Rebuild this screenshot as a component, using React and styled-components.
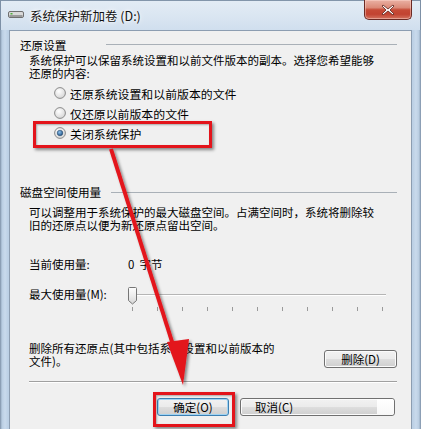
import React from 'react';
import styled, { createGlobalStyle } from 'styled-components';

const Global = createGlobalStyle`
  html, body { margin: 0; padding: 0; background: #fff; }
  body { font-family: "Noto Sans CJK SC", "Noto Sans CJK JP", sans-serif; }
`;

const Window = styled.div`
  position: relative;
  width: 421px;
  height: 429px;
  overflow: hidden;
  display: flex;
  flex-direction: column;
  background: linear-gradient(90deg, #7d90a6 0, #b9cde2 2px, #c9daec 5px, #bcd0e5 8px, #c6d8ea 50%, #bcd0e5 413px, #c9daec 416px, #b9cde2 419px, #7d90a6 421px);
`;

const TitleBar = styled.div`
  height: 30px;
  display: flex;
  align-items: center;
  padding-left: 8px;
  background: linear-gradient(180deg, #e3ecf5 0%, #d9e5f1 60%, #d0dfee 100%);
  box-shadow: inset 1px 0 0 #7d90a6, inset -1px 0 0 #7d90a6, inset 0 1px 0 #8295aa;
`;

const TitleText = styled.span`
  margin-left: 6px;
  font-size: 12.5px;
  color: #111;
  text-shadow: 0 0 6px #fff, 0 0 3px #fff;
`;

const CloseBtn = styled.div`
  margin-left: auto;
  margin-right: 9px;
  align-self: flex-start;
  width: 46px;
  height: 19px;
  border: 1px solid #6b2a24;
  border-top: none;
  border-radius: 0 0 5px 5px;
  background: linear-gradient(180deg, #eab1a4 0%, #db8a78 40%, #c64a36 52%, #c24331 75%, #d3725f 100%);
  display: flex;
  align-items: center;
  justify-content: center;
  box-shadow: inset 0 0 0 1px rgba(255, 220, 210, 0.45);
`;

const Body = styled.div`
  flex: 1;
  margin: 0 9px;
  background: #f0f0f0;
  border: 1px solid #8c9db1;
  border-bottom: none;
  padding: 6px 14px 0 10px;
  display: flex;
  flex-direction: column;
  font-size: 11.5px;
  color: #000;
`;

const GroupHeader = styled.div`
  display: flex;
  align-items: center;
  height: 16px;
  margin-top: ${p => p.$mt || 0}px;
`;

const GroupLabel = styled.span`
  font-size: 11.6px;
  line-height: 16px;
`;

const GroupLine = styled.div`
  flex: 1;
  height: 1px;
  margin-left: ${p => p.$gap}px;
  margin-top: ${p => p.$dy || 0}px;
  background: #a9b0b7;
`;

const Para = styled.div`
  padding-left: 9px;
  line-height: ${p => p.$lh || 12.5}px;
  margin-top: ${p => p.$mt || 0}px;
  white-space: nowrap;
`;

const RadioList = styled.div`
  display: flex;
  flex-direction: column;
  margin-top: 4px;
  padding-left: 34px;
`;

const RadioRow = styled.div`
  display: flex;
  align-items: center;
  height: 20px;
  gap: 4px;
  font-size: 11.9px;
`;

const InfoRow = styled.div`
  display: flex;
  align-items: center;
  height: ${p => p.$h || 16}px;
  margin-top: ${p => p.$mt || 0}px;
  padding-left: 9px;
`;

const InfoLabel = styled.span`
  width: ${p => p.$w}px;
  flex: none;
`;

const SliderRow = styled.div`
  display: flex;
  align-items: flex-start;
  margin-top: 10px;
  padding-left: 9px;
  height: 30px;
`;

const SliderLabel = styled.span`
  width: 98px;
  line-height: 24px;
  flex: none;
`;

const DeleteRow = styled.div`
  display: flex;
  align-items: flex-start;
  margin-top: 30px;
  padding-left: 9px;
`;

const DeleteText = styled.div`
  line-height: 12.5px;
  white-space: nowrap;
`;

const Button = styled.div`
  box-sizing: border-box;
  flex: none;
  width: ${p => p.$w}px;
  height: 18px;
  margin-top: ${p => p.$mt || 0}px;
  margin-left: ${p => (p.$pushRight ? 'auto' : '0')};
  border: 1px solid ${p => (p.$default ? '#3c7fb1' : '#707070')};
  border-radius: 3px;
  background: linear-gradient(180deg, #f2f2f2 0%, #ebebeb 48%, #dddddd 52%, #cfcfcf 100%);
  box-shadow: inset 0 0 0 1px ${p => (p.$default ? '#9fd3f3' : '#fbfbfb')};
  display: flex;
  align-items: center;
  justify-content: ${p => (p.$left ? 'flex-start' : 'center')};
  padding-left: ${p => p.$pl || 0}px;
  font-size: 11.5px;
  color: #000;
  overflow: hidden;
`;

const ButtonGlare = styled.span`
  margin-left: auto;
  width: 17px;
  height: 16px;
  border-radius: 0 2px 2px 0;
  background: linear-gradient(180deg, #ffffff 0%, #f7f7f7 100%);
`;

const Separator = styled.div`
  height: 1px;
  margin: 13px 0 0 9px;
  background: #a0a0a0;
  box-shadow: 0 1px 0 #ffffff;
`;

const ButtonRow = styled.div`
  display: flex;
  justify-content: flex-end;
  gap: 11px;
  margin-top: 16px;
  padding-right: 2px;
`;

const RedBox = styled.div`
  position: absolute;
  left: ${p => p.$x}px;
  top: ${p => p.$y}px;
  width: ${p => p.$w}px;
  height: ${p => p.$h}px;
  box-sizing: border-box;
  border: 3px solid #e3141b;
  box-shadow: 2px 2px 3px rgba(0, 0, 0, 0.45), inset 1px 1px 2px rgba(0, 0, 0, 0.3);
  pointer-events: none;
`;

const ArrowLayer = styled.svg`
  position: absolute;
  left: 0;
  top: 0;
  pointer-events: none;
`;

function Radio({ checked }) {
  return (
    <svg width="12" height="12" viewBox="0 0 12 12">
      <defs>
        <radialGradient id="rf" cx="0.4" cy="0.35" r="0.7">
          <stop offset="0" stopColor="#ffffff" />
          <stop offset="1" stopColor="#d4d4d4" />
        </radialGradient>
        <radialGradient id="rd" cx="0.4" cy="0.35" r="0.7">
          <stop offset="0" stopColor="#8cc1ee" />
          <stop offset="1" stopColor="#1b4d7e" />
        </radialGradient>
      </defs>
      <circle cx="6" cy="6" r="5.4" fill="url(#rf)" stroke="#8b8b8b" strokeWidth="1" />
      {checked && <circle cx="6" cy="6" r="2.8" fill="url(#rd)" stroke="#1a3f63" strokeWidth="0.5" />}
    </svg>
  );
}

function Slider() {
  const ticks = [];
  for (let i = 0; i < 11; i++) ticks.push(5 + i * 25);
  return (
    <svg width="262" height="30" viewBox="0 0 262 30">
      <line x1="9" y1="12.5" x2="259" y2="12.5" stroke="#b5b5b5" strokeWidth="1" />
      <line x1="9" y1="13.5" x2="259" y2="13.5" stroke="#ffffff" strokeWidth="1" />
      {ticks.map(x => (
        <line key={x} x1={x + 0.5} y1="25" x2={x + 0.5} y2="29" stroke="#9a9a9a" strokeWidth="1" />
      ))}
      <defs>
        <linearGradient id="th" x1="0" y1="0" x2="0" y2="1">
          <stop offset="0" stopColor="#fdfdfd" />
          <stop offset="0.5" stopColor="#ececec" />
          <stop offset="1" stopColor="#d6d6d6" />
        </linearGradient>
      </defs>
      <path d="M1.5 6.5 Q1.5 5.5 2.5 5.5 L8.5 5.5 Q9.5 5.5 9.5 6.5 L9.5 18.5 L5.5 22 L1.5 18.5 Z" fill="url(#th)" stroke="#767676" strokeWidth="1" />
    </svg>
  );
}

export default function App() {
  return (
    <>
      <Global />
      <Window>
        <TitleBar>
          <svg width="16" height="8" viewBox="0 0 16 8">
            <rect x="0.5" y="0.5" width="15" height="6" rx="1.5" fill="#d9d9d9" stroke="#6f6f6f" />
            <rect x="1.5" y="4" width="13" height="2" fill="#9a9a9a" />
            <rect x="2.5" y="2" width="2" height="1.5" fill="#4fae3c" />
          </svg>
          <TitleText>系统保护新加卷 (D:)</TitleText>
          <CloseBtn>
            <svg width="14" height="12" viewBox="0 0 14 12">
              <path d="M2 1 L7 5 L12 1 L13 2 L9 6 L13 10 L12 11 L7 7 L2 11 L1 10 L5 6 L1 2 Z" fill="#ffffff" stroke="#5a2019" strokeWidth="0.8" strokeLinejoin="round" />
            </svg>
          </CloseBtn>
        </TitleBar>
        <Body>
          <GroupHeader>
            <GroupLabel>还原设置</GroupLabel>
            <GroupLine $gap={40} $dy={-2} />
          </GroupHeader>
          <Para $mt={1}>
            系统保护可以保留系统设置和以前文件版本的副本。选择您希望能够
            <br />
            还原的内容:
          </Para>
          <RadioList>
            <RadioRow>
              <Radio />
              <span>还原系统设置和以前版本的文件</span>
            </RadioRow>
            <RadioRow>
              <Radio />
              <span>仅还原以前版本的文件</span>
            </RadioRow>
            <RadioRow>
              <Radio checked />
              <span>关闭系统保护</span>
            </RadioRow>
          </RadioList>
          <GroupHeader $mt={41}>
            <GroupLabel>磁盘空间使用量</GroupLabel>
            <GroupLine $gap={10} />
          </GroupHeader>
          <Para $mt={6} $lh={13}>
            可以调整用于系统保护的最大磁盘空间。占满空间时，系统将删除较
            <br />
            旧的还原点以便为新还原点留出空间。
          </Para>
          <InfoRow $mt={24}>
            <InfoLabel $w={99}>当前使用量:</InfoLabel>
            <span>0&nbsp;&nbsp;字节</span>
          </InfoRow>
          <SliderRow>
            <SliderLabel>最大使用量(M):</SliderLabel>
            <Slider />
          </SliderRow>
          <DeleteRow>
            <DeleteText>
              删除所有还原点(其中包括系统设置和以前版本的
              <br />
              文件)。
            </DeleteText>
            <Button $w={73} $mt={8} $pushRight>删除(D)</Button>
          </DeleteRow>
          <Separator />
          <ButtonRow>
            <Button $w={72} $default>确定(O)</Button>
            <Button $w={155} $left $pl={14}>
              取消(C)
              <ButtonGlare />
            </Button>
          </ButtonRow>
        </Body>
        <RedBox $x={33} $y={121} $w={179} $h={27} />
        <RedBox $x={153} $y={392} $w={82} $h={35} />
        <ArrowLayer width="421" height="429" viewBox="0 0 421 429">
          <defs>
            <filter id="sh" x="-20%" y="-20%" width="140%" height="140%">
              <feDropShadow dx="2" dy="2" stdDeviation="1.5" floodColor="#000" floodOpacity="0.45" />
            </filter>
          </defs>
          <g filter="url(#sh)">
            <line x1="111" y1="149" x2="174" y2="348" stroke="#e3141b" strokeWidth="4" />
            <path d="M167 342 L189 339 L183 385 Z" fill="#e3141b" />
          </g>
        </ArrowLayer>
      </Window>
    </>
  );
}
